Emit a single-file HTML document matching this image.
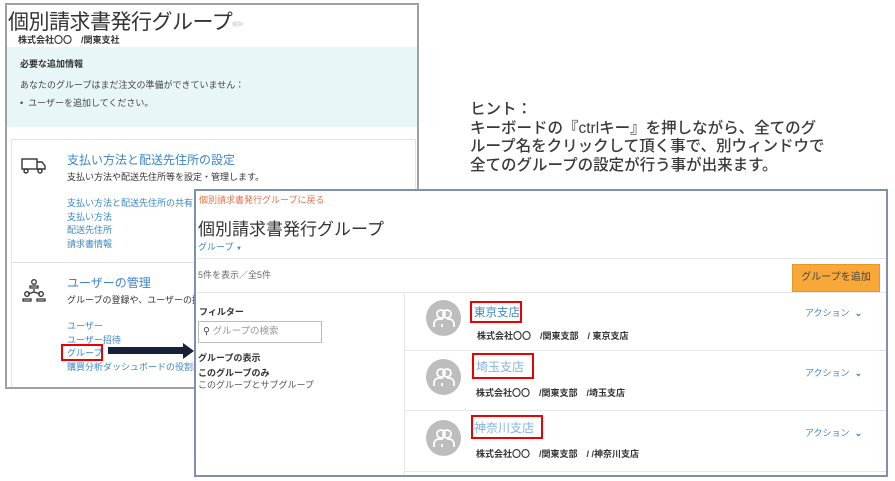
<!DOCTYPE html>
<html><head><meta charset="utf-8"><style>
*{margin:0;padding:0;box-sizing:border-box}
body{width:895px;height:481px;background:#fff;position:relative;overflow:hidden;font-family:"Liberation Sans","Noto Sans CJK JP",sans-serif;color:#333}
.a{position:absolute;white-space:nowrap}
.lnk{color:#3a86c8}
.s{font-size:9px}
.b{font-weight:bold}
</style></head><body>
<!-- left panel -->
<div class="a" style="left:5px;top:3px;width:414px;height:386px;border:2px solid #a0a0a0;background:#fff"></div>
<div class="a" style="left:8px;top:6px;font-size:21px;color:#333;letter-spacing:-0.5px">個別請求書発行グループ<span style="color:#ccc;font-size:14px">✏</span></div>
<div class="a b s" style="left:18px;top:33px">株式会社〇〇　/関東支社</div>
<div class="a" style="left:7px;top:47px;width:410px;height:80px;background:#e8f6f7"></div>
<div class="a b s" style="left:20px;top:57px">必要な追加情報</div>
<div class="a s" style="left:20px;top:78px;color:#444">あなたのグループはまだ注文の準備ができていません：</div>
<div class="a s" style="left:20px;top:96px;color:#444">•&nbsp; ユーザーを追加してください。</div>
<div class="a" style="left:11px;top:139px;width:405px;height:248px;border:1px solid #e4e4e4;border-bottom:none"></div>
<div class="a" style="left:11px;top:262px;width:405px;height:1px;background:#e0e0e0"></div>
<svg class="a" style="left:21px;top:157px" width="26" height="18" viewBox="0 0 26 18" fill="none" stroke="#333" stroke-width="1.4"><rect x="1" y="2" width="15" height="10"/><path d="M16 5h5l3 4v3h-8"/><circle cx="5" cy="14" r="2" fill="#fff"/><circle cx="19" cy="14" r="2" fill="#fff"/></svg>
<div class="a lnk" style="left:67px;top:151px;font-size:12px">支払い方法と配送先住所の設定</div>
<div class="a s" style="left:67px;top:170px">支払い方法や配送先住所等を設定・管理します。</div>
<div class="a lnk s" style="left:67px;top:197px;line-height:13.5px">支払い方法と配送先住所の共有<br>支払い方法<br>配送先住所<br>請求書情報</div>
<svg class="a" style="left:21px;top:278px" width="26" height="24" viewBox="0 0 26 24" fill="none" stroke="#333" stroke-width="1.3"><circle cx="13" cy="4" r="2.3"/><path d="M9 10v-2h8v2z"/><path d="M13 11v3M13 14l-6 2M13 14l6 2"/><circle cx="6" cy="16" r="2.3"/><path d="M2 23v-2h8v2z"/><circle cx="20" cy="16" r="2.3"/><path d="M16 23v-2h8v2z"/></svg>
<div class="a lnk" style="left:67px;top:274px;font-size:12px">ユーザーの管理</div>
<div class="a s" style="left:67px;top:293px">グループの登録や、ユーザーの招</div>
<div class="a lnk s" style="left:67px;top:320px;line-height:13.5px">ユーザー<br>ユーザー招待<br>グループ<br>購買分析ダッシュボードの役割設</div>
<div class="a" style="left:61px;top:344px;width:42px;height:17px;border:2px solid #e00"></div>
<div class="a" style="left:108px;top:347px;width:76px;height:7px;background:#17223a"></div>
<div class="a" style="left:183px;top:343px;width:0;height:0;border-top:8px solid transparent;border-bottom:8px solid transparent;border-left:11px solid #17223a"></div>
<!-- hint -->
<div class="a" style="left:470px;top:101px;font-size:15.5px;line-height:18.6px;color:#3a3a3a;font-weight:500">ヒント：<br>キーボードの『ctrlキー』を押しながら、全てのグ<br>ループ名をクリックして頂く事で、別ウィンドウで<br>全てのグループの設定が行う事が出来ます。</div>
<!-- right panel -->
<div class="a" style="left:194px;top:189px;width:694px;height:288px;border:2px solid #8090a8;background:#fff"></div>
<div class="a s" style="left:199px;top:193px;color:#e8704a">個別請求書発行グループに戻る</div>
<div class="a" style="left:198px;top:215px;font-size:17px;color:#333">個別請求書発行グループ</div>
<div class="a lnk s" style="left:198px;top:240px">グループ <span style="font-size:6px">▼</span></div>
<div class="a" style="left:197px;top:258px;width:689px;height:1px;background:#e6e6e6"></div>
<div class="a s" style="left:198px;top:268px;color:#666">5件を表示／全5件</div>
<div class="a" style="left:792px;top:264px;width:88px;height:28px;background:#f7a839;border:1px solid #e8952a;color:#444;font-size:10px;text-align:center;line-height:26px">グループを追加</div>
<div class="a" style="left:197px;top:292px;width:689px;height:1px;background:#e6e6e6"></div>
<div class="a" style="left:404px;top:293px;width:1px;height:182px;background:#e6e6e6"></div>
<div class="a b s" style="left:199px;top:305px">フィルター</div>
<div class="a" style="left:198px;top:321px;width:124px;height:22px;border:1px solid #bbb;font-size:9.5px;color:#999;line-height:20px;padding-left:4px"><span style="color:#444">⚲</span> グループの検索</div>
<div class="a b s" style="left:198px;top:351px">グループの表示</div>
<div class="a b s" style="left:198px;top:366px">このグループのみ</div>
<div class="a s" style="left:198px;top:378px;color:#555">このグループとサブグループ</div>
<div class="a" style="left:405px;top:350px;width:481px;height:1px;background:#e6e6e6"></div>
<div class="a" style="left:405px;top:410px;width:481px;height:1px;background:#e6e6e6"></div>
<div class="a" style="left:405px;top:471px;width:481px;height:1px;background:#e6e6e6"></div>
<!-- rows -->
<div class="a" style="left:426px;top:300px;width:35px;height:36px;border-radius:50%;background:#bdbdbd"></div>
<div class="a" style="left:426px;top:359px;width:35px;height:36px;border-radius:50%;background:#bdbdbd"></div>
<div class="a" style="left:426px;top:420px;width:35px;height:36px;border-radius:50%;background:#bdbdbd"></div>
<svg class="a" style="left:432px;top:307px" width="24" height="22" viewBox="0 0 24 22" fill="none" stroke="#fff" stroke-width="1.8"><circle cx="9" cy="7" r="4"/><circle cx="15" cy="7" r="4"/><path d="M2 20v-3a5 5 0 0 1 5-5h4M22 20v-3a5 5 0 0 0-5-5h-2M10 20v-3"/></svg>
<svg class="a" style="left:432px;top:366px" width="24" height="22" viewBox="0 0 24 22" fill="none" stroke="#fff" stroke-width="1.8"><circle cx="9" cy="7" r="4"/><circle cx="15" cy="7" r="4"/><path d="M2 20v-3a5 5 0 0 1 5-5h4M22 20v-3a5 5 0 0 0-5-5h-2M10 20v-3"/></svg>
<svg class="a" style="left:432px;top:427px" width="24" height="22" viewBox="0 0 24 22" fill="none" stroke="#fff" stroke-width="1.8"><circle cx="9" cy="7" r="4"/><circle cx="15" cy="7" r="4"/><path d="M2 20v-3a5 5 0 0 1 5-5h4M22 20v-3a5 5 0 0 0-5-5h-2M10 20v-3"/></svg>
<div class="a" style="left:470px;top:301px;width:52px;height:22px;border:2px solid #e00"></div>
<div class="a lnk" style="left:474px;top:304px;font-size:11.5px">東京支店</div>
<div class="a b s" style="left:477px;top:329px">株式会社〇〇　/関東支部　/ 東京支店</div>
<div class="a" style="left:472px;top:353px;width:62px;height:26px;border:2px solid #e00"></div>
<div class="a" style="left:476px;top:358px;font-size:12px;color:#7fb3e0">埼玉支店</div>
<div class="a b s" style="left:476px;top:386px">株式会社〇〇　/関東支部　/埼玉支店</div>
<div class="a" style="left:471px;top:415px;width:72px;height:24px;border:2px solid #e00"></div>
<div class="a" style="left:474px;top:419px;font-size:12px;color:#7fb3e0">神奈川支店</div>
<div class="a b s" style="left:476px;top:447px">株式会社〇〇　/関東支部　/ /神奈川支店</div>
<div class="a lnk s" style="left:805px;top:306px">アクション &nbsp;<b>⌄</b></div>
<div class="a lnk s" style="left:805px;top:366px">アクション &nbsp;<b>⌄</b></div>
<div class="a lnk s" style="left:805px;top:426px">アクション &nbsp;<b>⌄</b></div>
</body></html>
